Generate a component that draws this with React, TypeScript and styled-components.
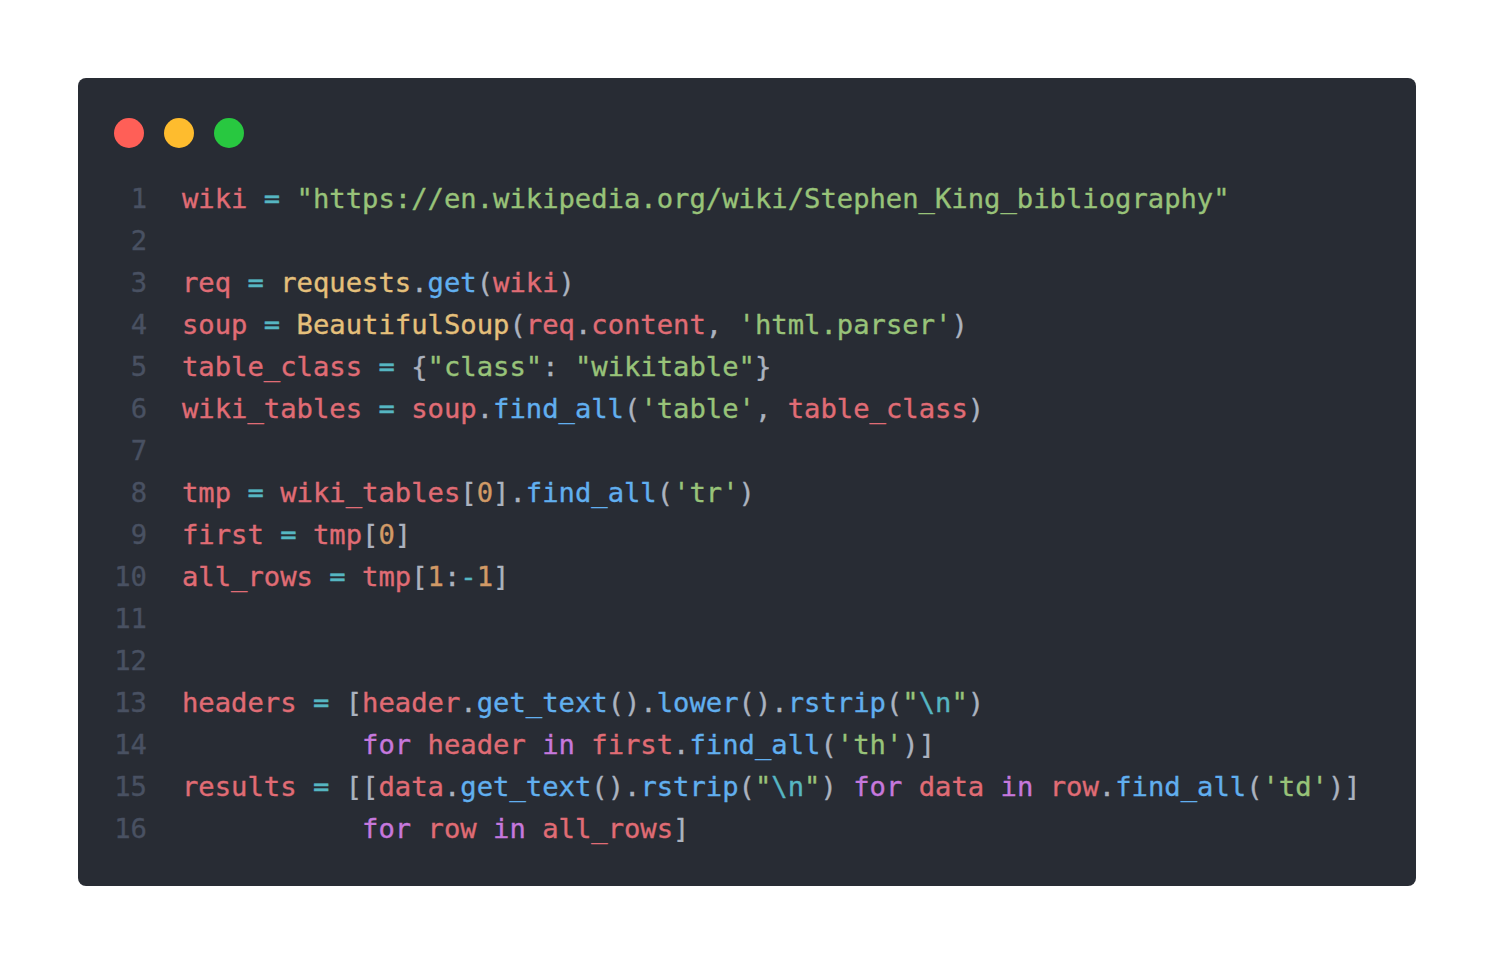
import React from "react";
import styled, { createGlobalStyle } from "styled-components";

const Global = createGlobalStyle`
  html, body { margin: 0; padding: 0; background: #ffffff; }
  body { font-family: "DejaVu Sans Mono", "Liberation Mono", monospace; }
`;

const Page = styled.div`
  padding: 78px 78px;
  display: flex;
  justify-content: center;
`;

const Window = styled.div`
  width: 1338px;
  box-sizing: border-box;
  background: #282c34;
  border-radius: 8px;
  padding: 40px 36px 36px 36px;
`;

const Dots = styled.div`
  display: flex;
  gap: 20px;
  margin-bottom: 30px;
`;

const Dot = styled.span<{ $c: string }>`
  width: 30px;
  height: 30px;
  border-radius: 50%;
  background: ${(p) => p.$c};
  display: block;
`;

const Code = styled.div`
  display: flex;
  flex-direction: column;
  font-family: "DejaVu Sans Mono", "Liberation Mono", monospace;
  font-size: 27.2px;
  line-height: 42px;
  -webkit-text-stroke: 0.35px currentColor;
`;

const Line = styled.div`
  display: flex;
  height: 42px;
  white-space: pre;
`;

const Num = styled.span`
  width: 33px;
  text-align: right;
  color: #495162;
  margin-right: 35px;
  flex: none;
`;

const Text = styled.span``;

const colors: Record<string, string> = {
  v: "#e06c75",
  o: "#56b6c2",
  s: "#98c379",
  c: "#e5c07b",
  f: "#61afef",
  k: "#c678dd",
  n: "#d19a66",
  p: "#abb2bf",
  e: "#56b6c2",
};

const Tok = styled.span<{ $t: string }>`
  color: ${(p) => colors[p.$t]};
`;

type T = [string, string];
const sp: T = ["p", " "];

const lines: T[][] = [
  [["v", "wiki"], sp, ["o", "="], sp, ["s", '"https://en.wikipedia.org/wiki/Stephen_King_bibliography"']],
  [],
  [["v", "req"], sp, ["o", "="], sp, ["c", "requests"], ["p", "."], ["f", "get"], ["p", "("], ["v", "wiki"], ["p", ")"]],
  [["v", "soup"], sp, ["o", "="], sp, ["c", "BeautifulSoup"], ["p", "("], ["v", "req"], ["p", "."], ["v", "content"], ["p", ", "], ["s", "'html.parser'"], ["p", ")"]],
  [["v", "table_class"], sp, ["o", "="], sp, ["p", "{"], ["s", '"class"'], ["p", ": "], ["s", '"wikitable"'], ["p", "}"]],
  [["v", "wiki_tables"], sp, ["o", "="], sp, ["v", "soup"], ["p", "."], ["f", "find_all"], ["p", "("], ["s", "'table'"], ["p", ", "], ["v", "table_class"], ["p", ")"]],
  [],
  [["v", "tmp"], sp, ["o", "="], sp, ["v", "wiki_tables"], ["p", "["], ["n", "0"], ["p", "]."], ["f", "find_all"], ["p", "("], ["s", "'tr'"], ["p", ")"]],
  [["v", "first"], sp, ["o", "="], sp, ["v", "tmp"], ["p", "["], ["n", "0"], ["p", "]"]],
  [["v", "all_rows"], sp, ["o", "="], sp, ["v", "tmp"], ["p", "["], ["n", "1"], ["p", ":"], ["o", "-"], ["n", "1"], ["p", "]"]],
  [],
  [],
  [["v", "headers"], sp, ["o", "="], sp, ["p", "["], ["v", "header"], ["p", "."], ["f", "get_text"], ["p", "()."], ["f", "lower"], ["p", "()."], ["f", "rstrip"], ["p", "("], ["s", '"'], ["e", "\\n"], ["s", '"'], ["p", ")"]],
  [["p", "           "], ["k", "for"], sp, ["v", "header"], sp, ["k", "in"], sp, ["v", "first"], ["p", "."], ["f", "find_all"], ["p", "("], ["s", "'th'"], ["p", ")]"]],
  [["v", "results"], sp, ["o", "="], sp, ["p", "[["], ["v", "data"], ["p", "."], ["f", "get_text"], ["p", "()."], ["f", "rstrip"], ["p", "("], ["s", '"'], ["e", "\\n"], ["s", '"'], ["p", ") "], ["k", "for"], sp, ["v", "data"], sp, ["k", "in"], sp, ["v", "row"], ["p", "."], ["f", "find_all"], ["p", "("], ["s", "'td'"], ["p", ")]"]],
  [["p", "           "], ["k", "for"], sp, ["v", "row"], sp, ["k", "in"], sp, ["v", "all_rows"], ["p", "]"]],
];

export default function App() {
  return (
    <>
      <Global />
      <Page>
        <Window>
          <Dots>
            <Dot $c="#ff5f57" />
            <Dot $c="#febc2e" />
            <Dot $c="#28c840" />
          </Dots>
          <Code>
            {lines.map((toks, i) => (
              <Line key={i}>
                <Num>{i + 1}</Num>
                <Text>
                  {toks.map(([t, s], j) => (
                    <Tok key={j} $t={t}>
                      {s}
                    </Tok>
                  ))}
                </Text>
              </Line>
            ))}
          </Code>
        </Window>
      </Page>
    </>
  );
}
